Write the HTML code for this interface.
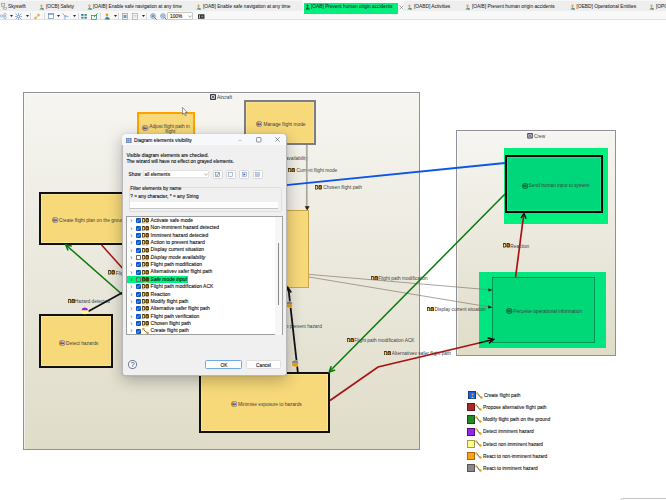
<!DOCTYPE html>
<html><head><meta charset="utf-8">
<style>
*{margin:0;padding:0;box-sizing:border-box}
html,body{width:666px;height:500px;overflow:hidden;background:#fff;font-family:"Liberation Sans",sans-serif;color:#222}
.a{position:absolute}
.t{position:absolute;white-space:nowrap;line-height:6px;height:6px;font-size:4.8px;-webkit-text-stroke:0.1px currentColor}
#tabs{left:0;top:0;width:666px;height:11.5px;background:linear-gradient(#f7f7f7 0,#f7f7f7 1.5px,#eeeeee 1.5px,#eeeeee 10.8px,#f4f4f4 10.8px)}
#tools{left:0;top:11px;width:666px;height:9px;background:#f8f8f8;border-bottom:1px solid #e2e2e2}
.dl{color:#404040;-webkit-text-stroke:0px}
.box{position:absolute;background:#f7d97a}
.cont{position:absolute;border:1.3px solid #909098;box-shadow:inset 0.6px 0.6px 0 #fdfdf8;background:linear-gradient(#f6f5f1,#dfdcc8)}
</style></head><body>
<div id="tabs" class="a"></div>
<div id="tools" class="a"></div>
<div class="a" style="left:302px;top:0;width:102px;height:12px;background:#fbfbfb"></div>
<div class="a" style="left:304px;top:2.7px;width:93.6px;height:11.3px;background:#00f07e"></div>
<svg class="a" style="left:0.5px;top:3px" width="6" height="7" viewBox="0 0 6 7"><rect x="0.5" y="0.5" width="3.2" height="2.6" fill="none" stroke="#8a8a8a" stroke-width="0.6"/><path d="M2 3.1V5.5H3" stroke="#8a8a8a" stroke-width="0.5" fill="none"/><rect x="3" y="4.3" width="2.5" height="2.2" fill="none" stroke="#9a9aa8" stroke-width="0.6"/></svg>
<div class="t" style="left:8px;top:3.60px;-webkit-text-stroke:0.05px #333;color:#262626">Skyswift</div>
<svg class="a" style="left:39px;top:4px" width="5" height="6" viewBox="0 0 5 6"><circle cx="2.5" cy="1.7" r="1.2" fill="#eaa84a"/><path d="M0.4 5.6 L2.5 2.9 L4.6 5.6Z" fill="#6a8cb8"/><circle cx="3.9" cy="4.9" r="0.9" fill="#3aa050"/></svg>
<div class="t" style="left:46px;top:3.60px;-webkit-text-stroke:0.05px #333;color:#262626">[OCB] Safety</div>
<svg class="a" style="left:87px;top:4px" width="5" height="6" viewBox="0 0 5 6"><circle cx="2.5" cy="1.7" r="1.2" fill="#eaa84a"/><path d="M0.4 5.6 L2.5 2.9 L4.6 5.6Z" fill="#6a8cb8"/><circle cx="3.9" cy="4.9" r="0.9" fill="#3aa050"/></svg>
<div class="t" style="left:93px;top:3.60px;-webkit-text-stroke:0.05px #333;color:#262626">[OAIB] Enable safe navigation at any time</div>
<svg class="a" style="left:196px;top:4px" width="5" height="6" viewBox="0 0 5 6"><circle cx="2.5" cy="1.7" r="1.2" fill="#eaa84a"/><path d="M0.4 5.6 L2.5 2.9 L4.6 5.6Z" fill="#6a8cb8"/><circle cx="3.9" cy="4.9" r="0.9" fill="#3aa050"/></svg>
<div class="t" style="left:203px;top:3.60px;-webkit-text-stroke:0.05px #333;color:#262626">[OAB] Enable safe navigation at any time</div>
<svg class="a" style="left:305px;top:4px" width="5" height="6" viewBox="0 0 5 6"><circle cx="2.5" cy="1.6" r="1.2" fill="#0a6a30"/><path d="M0.3 5.6 L2.5 2.6 L4.7 5.6Z" fill="#0a5a2a"/><circle cx="3.8" cy="4.8" r="0.9" fill="#0a8a3a"/></svg>
<div class="t" style="left:311px;top:3.60px;-webkit-text-stroke:0.05px #333;color:#262626">[OAB] Prevent human origin accidents</div>
<svg class="a" style="left:407px;top:4px" width="5" height="6" viewBox="0 0 5 6"><circle cx="2.5" cy="1.7" r="1.2" fill="#eaa84a"/><path d="M0.4 5.6 L2.5 2.9 L4.6 5.6Z" fill="#6a8cb8"/><circle cx="3.9" cy="4.9" r="0.9" fill="#3aa050"/></svg>
<div class="t" style="left:414px;top:3.60px;-webkit-text-stroke:0.05px #333;color:#262626">[OABD] Activities</div>
<svg class="a" style="left:465px;top:4px" width="5" height="6" viewBox="0 0 5 6"><circle cx="2.5" cy="1.7" r="1.2" fill="#eaa84a"/><path d="M0.4 5.6 L2.5 2.9 L4.6 5.6Z" fill="#6a8cb8"/><circle cx="3.9" cy="4.9" r="0.9" fill="#3aa050"/></svg>
<div class="t" style="left:472px;top:3.60px;-webkit-text-stroke:0.05px #333;color:#262626">[OAIB] Prevent human origin accidents</div>
<svg class="a" style="left:570px;top:4px" width="5" height="6" viewBox="0 0 5 6"><circle cx="2.5" cy="1.7" r="1.2" fill="#eaa84a"/><path d="M0.4 5.6 L2.5 2.9 L4.6 5.6Z" fill="#6a8cb8"/><circle cx="3.9" cy="4.9" r="0.9" fill="#3aa050"/></svg>
<div class="t" style="left:576.6px;top:3.60px;-webkit-text-stroke:0.05px #333;color:#262626">[OEBD] Operational Entities</div>
<svg class="a" style="left:649px;top:4px" width="5" height="6" viewBox="0 0 5 6"><circle cx="2.5" cy="1.7" r="1.2" fill="#eaa84a"/><path d="M0.4 5.6 L2.5 2.9 L4.6 5.6Z" fill="#6a8cb8"/><circle cx="3.9" cy="4.9" r="0.9" fill="#3aa050"/></svg>
<div class="t" style="left:656px;top:3.60px;-webkit-text-stroke:0.05px #333;color:#262626">[OPC] Operational Processes</div>
<svg class="a" style="left:398.5px;top:4.5px" width="5" height="5" viewBox="0 0 5 5"><path d="M0.6 0.6L4.4 4.4M4.4 0.6L0.6 4.4" stroke="#666" stroke-width="0.55"/></svg>

<svg class="a" style="left:0px;top:13px" width="7" height="6" viewBox="0 0 7 6"><circle cx="1.5" cy="3" r="1.2" fill="none" stroke="#86a8d4" stroke-width="0.7"/><circle cx="5" cy="1.5" r="1.2" fill="none" stroke="#86a8d4" stroke-width="0.7"/><circle cx="5" cy="4.5" r="1.2" fill="none" stroke="#86a8d4" stroke-width="0.7"/><path d="M2.5 3L4 1.8M2.5 3L4 4.2" stroke="#86a8d4" stroke-width="0.6"/></svg>
<svg class="a" style="left:10px;top:15px" width="3" height="2" viewBox="0 0 3 2"><path d="M0 0H3L1.5 2Z" fill="#222"/></svg>
<svg class="a" style="left:15px;top:12.5px" width="7" height="7" viewBox="0 0 7 7"><path d="M0.5 0.5L6.5 6.5M6.5 0.5L0.5 6.5M3.5 0V7M0 3.5H7" stroke="#80a0cc" stroke-width="0.8"/><rect x="2.3" y="2.3" width="2.4" height="2.4" fill="#fff" stroke="#80a0cc" stroke-width="0.6"/></svg>
<svg class="a" style="left:25.5px;top:15px" width="3" height="2" viewBox="0 0 3 2"><path d="M0 0H3L1.5 2Z" fill="#222"/></svg>
<div class="a" style="left:30px;top:12.5px;width:0.7px;height:7px;background:#d8d8d8"></div>
<svg class="a" style="left:34px;top:12.5px" width="6" height="7" viewBox="0 0 6 7"><path d="M2 4.5L4 2.5" stroke="#c89020" stroke-width="0.6"/><path d="M0.2 5L1.5 3.7L2.8 5L1.5 6.3Z" fill="#f0c040" stroke="#c08a20" stroke-width="0.4"/><path d="M3.2 2L4.5 0.7L5.8 2L4.5 3.3Z" fill="#f0c040" stroke="#c08a20" stroke-width="0.4"/></svg>
<div class="a" style="left:44px;top:12.5px;width:0.7px;height:7px;background:#d8d8d8"></div>
<svg class="a" style="left:48px;top:13px" width="6" height="6" viewBox="0 0 6 6"><rect x="0.5" y="0.5" width="5" height="5" fill="#fff" stroke="#6a8ab8" stroke-width="0.7"/><path d="M0.5 1.5H5.5" stroke="#6a8ab8" stroke-width="0.7"/></svg>
<svg class="a" style="left:56.5px;top:15px" width="3" height="2" viewBox="0 0 3 2"><path d="M0 0H3L1.5 2Z" fill="#222"/></svg>
<svg class="a" style="left:62px;top:13px" width="7" height="7" viewBox="0 0 7 7"><path d="M0.5 0.5L3 3L3 6.5M3 3L6.5 3.5" stroke="#6a9ad0" stroke-width="0.8" fill="none"/><circle cx="3" cy="3" r="1" fill="#9ab8e0"/></svg>
<svg class="a" style="left:73px;top:15px" width="3" height="2" viewBox="0 0 3 2"><path d="M0 0H3L1.5 2Z" fill="#222"/></svg>
<div class="a" style="left:78px;top:12.5px;width:0.7px;height:7px;background:#d8d8d8"></div>
<svg class="a" style="left:81px;top:13px" width="6" height="6" viewBox="0 0 6 6"><rect x="0.3" y="1" width="2.2" height="1.8" fill="#2a6ab0"/><rect x="3.5" y="1" width="2.2" height="1.8" fill="#2a9a50"/><rect x="0.3" y="3.8" width="2.2" height="1.8" fill="#2a9a50"/><rect x="3.5" y="3.8" width="2.2" height="1.8" fill="#2a6ab0"/></svg>
<svg class="a" style="left:91px;top:12.5px" width="7" height="7" viewBox="0 0 7 7"><rect x="0.5" y="2.5" width="5" height="4" fill="#fff" stroke="#3a6ab0" stroke-width="0.7"/><path d="M3 4L6.5 0.5" stroke="#20a040" stroke-width="1"/></svg>
<div class="a" style="left:100px;top:12.5px;width:0.7px;height:7px;background:#d8d8d8"></div>
<svg class="a" style="left:104px;top:12.5px" width="6" height="7" viewBox="0 0 6 7"><circle cx="3" cy="1.8" r="1.4" fill="#e0a020"/><path d="M0.3 6.5L3 3.3L5.7 6.5Z" fill="#3a7ab8"/><circle cx="4.6" cy="5.5" r="1" fill="#2aa040"/></svg>
<svg class="a" style="left:113.5px;top:15px" width="3" height="2" viewBox="0 0 3 2"><path d="M0 0H3L1.5 2Z" fill="#222"/></svg>
<div class="a" style="left:118px;top:12.5px;width:0.7px;height:7px;background:#d8d8d8"></div>
<svg class="a" style="left:122px;top:12.5px" width="6" height="7" viewBox="0 0 6 7"><rect x="0.5" y="0.5" width="5" height="6" fill="#f4f0e0" stroke="#8a8aa0" stroke-width="0.6"/><rect x="1.5" y="2" width="3" height="3" fill="#6a9ad0"/></svg>
<svg class="a" style="left:132px;top:12.5px" width="6" height="7" viewBox="0 0 6 7"><rect x="0.5" y="0.5" width="5" height="6" fill="#f8f8f8" stroke="#9a9a9a" stroke-width="0.6"/><path d="M1.5 2.5H4.5M1.5 4H4.5" stroke="#aaa" stroke-width="0.5"/></svg>
<svg class="a" style="left:141.5px;top:15px" width="3" height="2" viewBox="0 0 3 2"><path d="M0 0H3L1.5 2Z" fill="#222"/></svg>
<div class="a" style="left:146px;top:12.5px;width:0.7px;height:7px;background:#d8d8d8"></div>
<svg class="a" style="left:150px;top:12.5px" width="7" height="7" viewBox="0 0 7 7"><circle cx="3" cy="3" r="2.3" fill="#d8e8f8" stroke="#5a7aa0" stroke-width="0.7"/><path d="M1.8 3H4.2M3 1.8V4.2" stroke="#2a5aa0" stroke-width="0.7"/><path d="M4.6 4.6L6.6 6.6" stroke="#806040" stroke-width="1"/></svg>
<svg class="a" style="left:160px;top:12.5px" width="7" height="7" viewBox="0 0 7 7"><circle cx="3" cy="3" r="2.3" fill="#d8e8f8" stroke="#5a7aa0" stroke-width="0.7"/><path d="M1.8 3H4.2" stroke="#2a5aa0" stroke-width="0.7"/><path d="M4.6 4.6L6.6 6.6" stroke="#806040" stroke-width="1"/></svg>
<div class="a" style="left:167.4px;top:11.6px;width:26px;height:8.6px;background:#fff;border:0.6px solid #c8c8c8;border-radius:1px"></div>
<div class="t" style="left:170px;top:13.6px;font-size:4.8px;color:#222">100%</div>
<svg class="a" style="left:188px;top:14.5px" width="4" height="3" viewBox="0 0 4 3"><path d="M0.3 0.5L2 2.3L3.7 0.5" stroke="#555" stroke-width="0.5" fill="none"/></svg>
<svg class="a" style="left:198px;top:14px" width="7" height="5" viewBox="0 0 7 5"><rect x="0" y="0.3" width="6.5" height="4.5" rx="0.5" fill="#333"/><rect x="1" y="1.2" width="0.8" height="2.8" fill="#ddd"/><circle cx="4.3" cy="2.5" r="1.1" fill="#888"/></svg>

<!-- Aircraft container -->
<div class="cont" style="left:23px;top:92px;width:397px;height:358px"></div>
<!-- Crew container -->
<div class="cont" style="left:456px;top:130px;width:160px;height:226px"></div>

<!-- boxes -->
<div class="box" style="left:137px;top:112px;width:58px;height:30px;border:2px solid #ffa200"></div>
<div class="box" style="left:243.8px;top:100px;width:72px;height:45px;border:2px solid #7c7c84;box-shadow:inset 0 0 0 0.6px #fbe8a0"></div>
<div class="box" style="left:39px;top:192px;width:150px;height:53px;border:2px solid #111;box-shadow:inset 0 0 0 0.7px #fbeaa0"></div>
<div class="box" style="left:200px;top:210px;width:109px;height:78px;border:1px solid #c9a54a"></div>
<div class="box" style="left:39px;top:314px;width:74px;height:54px;border:2px solid #111;box-shadow:inset 0 0 0 0.7px #fbeaa0"></div>
<div class="box" style="left:198.6px;top:371.5px;width:131px;height:61.5px;border:2px solid #111;box-shadow:inset 0 0 0 0.7px #fbeaa0"></div>

<!-- green -->
<div class="a" style="left:504px;top:148px;width:104px;height:76px;background:#00f080"></div>
<div class="a" style="left:505px;top:155px;width:98px;height:58px;background:#00d67a;border:2px solid #000;box-shadow:inset 0 0 0 0.7px #20f090"></div>
<div class="a" style="left:479px;top:272px;width:127px;height:76px;background:#00e57f"></div>
<div class="a" style="left:492px;top:277px;width:103px;height:66px;background:#00d878;border:1px solid #00934f"></div>

<svg class="a" style="left:142.0px;top:125.20px" width="6.5" height="6" viewBox="0 0 6.5 6"><ellipse cx="3.2" cy="3" rx="2.9" ry="2.7" fill="#c8d0e0" stroke="#6a6050" stroke-width="0.6"/><path d="M0.4 3A2.8 2.6 0 0 1 2.6 0.4V5.6A2.8 2.6 0 0 1 0.4 3Z" fill="#f08010"/><path d="M1.6 3.2H4.6" stroke="#1a2a50" stroke-width="0.9"/><path d="M3.6 2.2L4.8 3.2L3.6 4.1" stroke="#1a2a50" stroke-width="0.5" fill="none"/></svg>
<div class="t dl" style="left:149.2px;top:123.60px;">Adjust flight path in</div>
<div class="t dl" style="left:165.2px;top:129.30px;">flight</div>
<svg class="a" style="left:255.5px;top:120.80px" width="6.5" height="6" viewBox="0 0 6.5 6"><ellipse cx="3.2" cy="3" rx="2.9" ry="2.7" fill="#c8d0e0" stroke="#6a6050" stroke-width="0.6"/><path d="M0.4 3A2.8 2.6 0 0 1 2.6 0.4V5.6A2.8 2.6 0 0 1 0.4 3Z" fill="#f08010"/><path d="M1.6 3.2H4.6" stroke="#1a2a50" stroke-width="0.9"/><path d="M3.6 2.2L4.8 3.2L3.6 4.1" stroke="#1a2a50" stroke-width="0.5" fill="none"/></svg>
<div class="t dl" style="left:263.4px;top:121.60px;">Manage flight mode</div>
<svg class="a" style="left:52.0px;top:217.00px" width="6.5" height="6" viewBox="0 0 6.5 6"><ellipse cx="3.2" cy="3" rx="2.9" ry="2.7" fill="#c8d0e0" stroke="#6a6050" stroke-width="0.6"/><path d="M0.4 3A2.8 2.6 0 0 1 2.6 0.4V5.6A2.8 2.6 0 0 1 0.4 3Z" fill="#f08010"/><path d="M1.6 3.2H4.6" stroke="#1a2a50" stroke-width="0.9"/><path d="M3.6 2.2L4.8 3.2L3.6 4.1" stroke="#1a2a50" stroke-width="0.5" fill="none"/></svg>
<div class="t dl" style="left:59px;top:217.80px;">Create flight plan on the ground</div>
<svg class="a" style="left:59.0px;top:339.70px" width="6.5" height="6" viewBox="0 0 6.5 6"><ellipse cx="3.2" cy="3" rx="2.9" ry="2.7" fill="#c8d0e0" stroke="#6a6050" stroke-width="0.6"/><path d="M0.4 3A2.8 2.6 0 0 1 2.6 0.4V5.6A2.8 2.6 0 0 1 0.4 3Z" fill="#f08010"/><path d="M1.6 3.2H4.6" stroke="#1a2a50" stroke-width="0.9"/><path d="M3.6 2.2L4.8 3.2L3.6 4.1" stroke="#1a2a50" stroke-width="0.5" fill="none"/></svg>
<div class="t dl" style="left:66px;top:340.50px;">Detect hazards</div>
<svg class="a" style="left:230.5px;top:400.90px" width="6.5" height="6" viewBox="0 0 6.5 6"><ellipse cx="3.2" cy="3" rx="2.9" ry="2.7" fill="#c8d0e0" stroke="#6a6050" stroke-width="0.6"/><path d="M0.4 3A2.8 2.6 0 0 1 2.6 0.4V5.6A2.8 2.6 0 0 1 0.4 3Z" fill="#f08010"/><path d="M1.6 3.2H4.6" stroke="#1a2a50" stroke-width="0.9"/><path d="M3.6 2.2L4.8 3.2L3.6 4.1" stroke="#1a2a50" stroke-width="0.5" fill="none"/></svg>
<div class="t dl" style="left:238px;top:401.70px;">Minimise exposure to hazards</div>
<svg class="a" style="left:521.5px;top:182.50px" width="6.5" height="6" viewBox="0 0 6.5 6"><ellipse cx="3.2" cy="3" rx="2.9" ry="2.7" fill="#08a860" stroke="#065a35" stroke-width="0.6"/><path d="M1.3 3H4.6" stroke="#033a20" stroke-width="0.9"/><circle cx="1.6" cy="2.6" r="0.8" fill="#0a7a30"/></svg>
<div class="t dl" style="left:528.6px;top:183.30px;">Send human input to system</div>
<svg class="a" style="left:506.0px;top:308.00px" width="6.5" height="6" viewBox="0 0 6.5 6"><ellipse cx="3.2" cy="3" rx="2.9" ry="2.7" fill="#08a860" stroke="#065a35" stroke-width="0.6"/><path d="M1.3 3H4.6" stroke="#033a20" stroke-width="0.9"/><circle cx="1.6" cy="2.6" r="0.8" fill="#0a7a30"/></svg>
<div class="t dl" style="left:513.3px;top:308.80px;">Perceive operational information</div>
<svg class="a" style="left:209.8px;top:94px" width="6" height="6" viewBox="0 0 6 6"><rect x="0" y="0" width="6" height="6" rx="0.8" fill="#3a3a48"/><rect x="1" y="1" width="4" height="4" fill="#c8c8d8"/><path d="M1.5 1.5L4.5 4.5M4.5 1.5L1.5 4.5" stroke="#3a3a48" stroke-width="0.7"/></svg>
<div class="t dl" style="left:217px;top:94.80px;">Aircraft</div>
<svg class="a" style="left:526.5px;top:133px" width="6" height="5.5" viewBox="0 0 6 6"><rect x="0" y="0" width="6" height="6" rx="0.8" fill="#3a3a48"/><rect x="1" y="1" width="4" height="4" fill="#c8c8d8"/><path d="M1.5 1.5L4.5 4.5M4.5 1.5L1.5 4.5" stroke="#3a3a48" stroke-width="0.7"/></svg>
<div class="t dl" style="left:534px;top:133.80px;">Crew</div>
<svg class="a" style="left:248.30px;top:155.60px" width="7" height="4.6" viewBox="0 0 7 4.6"><path d="M0.1 0.1H2Q3.3 0.1 3.3 2.3Q3.3 4.5 2 4.5H0.1Z" fill="#3a2a08"/><path d="M0.9 0.9H1.8Q2.4 0.9 2.4 2.3Q2.4 3.7 1.8 3.7H0.9Z" fill="#f0dc90"/><rect x="3.5" y="0.1" width="3.4" height="4.4" rx="1" fill="#3a2a08"/><path d="M4.2 2.3H6.2M5.2 0.9V3.7" stroke="#e88a10" stroke-width="0.9"/></svg>
<div class="t dl" style="left:255.30px;top:155.90px;">Display mode availability</div>
<svg class="a" style="left:288.30px;top:167.60px" width="7" height="4.6" viewBox="0 0 7 4.6"><path d="M0.1 0.1H2Q3.3 0.1 3.3 2.3Q3.3 4.5 2 4.5H0.1Z" fill="#3a2a08"/><path d="M0.9 0.9H1.8Q2.4 0.9 2.4 2.3Q2.4 3.7 1.8 3.7H0.9Z" fill="#f0dc90"/><rect x="3.5" y="0.1" width="3.4" height="4.4" rx="1" fill="#3a2a08"/><path d="M4.2 2.3H6.2M5.2 0.9V3.7" stroke="#e88a10" stroke-width="0.9"/></svg>
<div class="t dl" style="left:296.50px;top:167.90px;">Current flight mode</div>
<svg class="a" style="left:315.30px;top:185.10px" width="7" height="4.6" viewBox="0 0 7 4.6"><path d="M0.1 0.1H2Q3.3 0.1 3.3 2.3Q3.3 4.5 2 4.5H0.1Z" fill="#3a2a08"/><path d="M0.9 0.9H1.8Q2.4 0.9 2.4 2.3Q2.4 3.7 1.8 3.7H0.9Z" fill="#f0dc90"/><rect x="3.5" y="0.1" width="3.4" height="4.4" rx="1" fill="#3a2a08"/><path d="M4.2 2.3H6.2M5.2 0.9V3.7" stroke="#e88a10" stroke-width="0.9"/></svg>
<div class="t dl" style="left:323.30px;top:185.40px;">Chosen flight path</div>
<svg class="a" style="left:370.90px;top:275.90px" width="7" height="4.6" viewBox="0 0 7 4.6"><path d="M0.1 0.1H2Q3.3 0.1 3.3 2.3Q3.3 4.5 2 4.5H0.1Z" fill="#3a2a08"/><path d="M0.9 0.9H1.8Q2.4 0.9 2.4 2.3Q2.4 3.7 1.8 3.7H0.9Z" fill="#f0dc90"/><rect x="3.5" y="0.1" width="3.4" height="4.4" rx="1" fill="#3a2a08"/><path d="M4.2 2.3H6.2M5.2 0.9V3.7" stroke="#e88a10" stroke-width="0.9"/></svg>
<div class="t dl" style="left:378.30px;top:276.20px;">Flight path modification</div>
<svg class="a" style="left:427.00px;top:306.90px" width="7" height="4.6" viewBox="0 0 7 4.6"><path d="M0.1 0.1H2Q3.3 0.1 3.3 2.3Q3.3 4.5 2 4.5H0.1Z" fill="#3a2a08"/><path d="M0.9 0.9H1.8Q2.4 0.9 2.4 2.3Q2.4 3.7 1.8 3.7H0.9Z" fill="#f0dc90"/><rect x="3.5" y="0.1" width="3.4" height="4.4" rx="1" fill="#3a2a08"/><path d="M4.2 2.3H6.2M5.2 0.9V3.7" stroke="#e88a10" stroke-width="0.9"/></svg>
<div class="t dl" style="left:434.50px;top:307.20px;">Display current situation</div>
<svg class="a" style="left:262.30px;top:323.40px" width="7" height="4.6" viewBox="0 0 7 4.6"><path d="M0.1 0.1H2Q3.3 0.1 3.3 2.3Q3.3 4.5 2 4.5H0.1Z" fill="#3a2a08"/><path d="M0.9 0.9H1.8Q2.4 0.9 2.4 2.3Q2.4 3.7 1.8 3.7H0.9Z" fill="#f0dc90"/><rect x="3.5" y="0.1" width="3.4" height="4.4" rx="1" fill="#3a2a08"/><path d="M4.2 2.3H6.2M5.2 0.9V3.7" stroke="#e88a10" stroke-width="0.9"/></svg>
<div class="t dl" style="left:269.80px;top:323.70px;">Action to prevent hazard</div>
<svg class="a" style="left:346.80px;top:337.90px" width="7" height="4.6" viewBox="0 0 7 4.6"><path d="M0.1 0.1H2Q3.3 0.1 3.3 2.3Q3.3 4.5 2 4.5H0.1Z" fill="#3a2a08"/><path d="M0.9 0.9H1.8Q2.4 0.9 2.4 2.3Q2.4 3.7 1.8 3.7H0.9Z" fill="#f0dc90"/><rect x="3.5" y="0.1" width="3.4" height="4.4" rx="1" fill="#3a2a08"/><path d="M4.2 2.3H6.2M5.2 0.9V3.7" stroke="#e88a10" stroke-width="0.9"/></svg>
<div class="t dl" style="left:354.30px;top:338.20px;">Flight path modification ACK</div>
<svg class="a" style="left:384.30px;top:350.90px" width="7" height="4.6" viewBox="0 0 7 4.6"><path d="M0.1 0.1H2Q3.3 0.1 3.3 2.3Q3.3 4.5 2 4.5H0.1Z" fill="#3a2a08"/><path d="M0.9 0.9H1.8Q2.4 0.9 2.4 2.3Q2.4 3.7 1.8 3.7H0.9Z" fill="#f0dc90"/><rect x="3.5" y="0.1" width="3.4" height="4.4" rx="1" fill="#3a2a08"/><path d="M4.2 2.3H6.2M5.2 0.9V3.7" stroke="#e88a10" stroke-width="0.9"/></svg>
<div class="t dl" style="left:391.80px;top:351.20px;">Alternativev safer flight path</div>
<svg class="a" style="left:503.00px;top:243.40px" width="7" height="4.6" viewBox="0 0 7 4.6"><path d="M0.1 0.1H2Q3.3 0.1 3.3 2.3Q3.3 4.5 2 4.5H0.1Z" fill="#3a2a08"/><path d="M0.9 0.9H1.8Q2.4 0.9 2.4 2.3Q2.4 3.7 1.8 3.7H0.9Z" fill="#f0dc90"/><rect x="3.5" y="0.1" width="3.4" height="4.4" rx="1" fill="#3a2a08"/><path d="M4.2 2.3H6.2M5.2 0.9V3.7" stroke="#e88a10" stroke-width="0.9"/></svg>
<div class="t dl" style="left:510.30px;top:243.70px;">Reaction</div>
<svg class="a" style="left:67.50px;top:298.70px" width="7" height="4.6" viewBox="0 0 7 4.6"><path d="M0.1 0.1H2Q3.3 0.1 3.3 2.3Q3.3 4.5 2 4.5H0.1Z" fill="#3a2a08"/><path d="M0.9 0.9H1.8Q2.4 0.9 2.4 2.3Q2.4 3.7 1.8 3.7H0.9Z" fill="#f0dc90"/><rect x="3.5" y="0.1" width="3.4" height="4.4" rx="1" fill="#3a2a08"/><path d="M4.2 2.3H6.2M5.2 0.9V3.7" stroke="#e88a10" stroke-width="0.9"/></svg>
<div class="t dl" style="left:74.80px;top:299.00px;">Hazard detected</div>
<svg class="a" style="left:108.30px;top:270.40px" width="7" height="4.6" viewBox="0 0 7 4.6"><path d="M0.1 0.1H2Q3.3 0.1 3.3 2.3Q3.3 4.5 2 4.5H0.1Z" fill="#3a2a08"/><path d="M0.9 0.9H1.8Q2.4 0.9 2.4 2.3Q2.4 3.7 1.8 3.7H0.9Z" fill="#f0dc90"/><rect x="3.5" y="0.1" width="3.4" height="4.4" rx="1" fill="#3a2a08"/><path d="M4.2 2.3H6.2M5.2 0.9V3.7" stroke="#e88a10" stroke-width="0.9"/></svg>
<div class="t dl" style="left:115.80px;top:270.70px;">Flight path modification</div>

<div class="a" style="left:467.7px;top:391.10px;width:8.2px;height:8.1px;background:#1565e8;border:0.7px solid #1a3a80"></div>
<svg class="a" style="left:469.5px;top:392.5px" width="5" height="6" viewBox="0 0 5 6"><circle cx="2.6" cy="1.6" r="1" fill="#f0a020"/><path d="M0.8 5.2L2.5 3.2L4.3 5.2" fill="#9ad080"/></svg>
<svg class="a" style="left:476.0px;top:391.5px" width="7" height="7" viewBox="0 0 7 7"><path d="M1.3 1.3L2.8 2.6L3.4 4.2L5.3 5.4" stroke="#2a2a2a" stroke-width="0.75" fill="none"/><circle cx="1.3" cy="1.4" r="1.1" fill="#f09a10"/><circle cx="5.4" cy="5.5" r="1.25" fill="#f09a10"/></svg>
<div class="t" style="left:483.9px;top:392.90px;color:#222">Create flight path</div>
<div class="a" style="left:467.1px;top:403.30px;width:8.2px;height:8.1px;background:#a82a2a;border:0.7px solid #6a1a1a"></div>
<svg class="a" style="left:475.40000000000003px;top:403.7px" width="7" height="7" viewBox="0 0 7 7"><path d="M1.3 1.3L2.8 2.6L3.4 4.2L5.3 5.4" stroke="#2a2a2a" stroke-width="0.75" fill="none"/><circle cx="1.3" cy="1.4" r="1.1" fill="#f09a10"/><circle cx="5.4" cy="5.5" r="1.25" fill="#f09a10"/></svg>
<div class="t" style="left:483px;top:405.10px;color:#222">Propose alternative flight path</div>
<div class="a" style="left:467.1px;top:415.48px;width:8.2px;height:8.1px;background:#228a22;border:0.7px solid #1a4a1a"></div>
<svg class="a" style="left:475.40000000000003px;top:415.88px" width="7" height="7" viewBox="0 0 7 7"><path d="M1.3 1.3L2.8 2.6L3.4 4.2L5.3 5.4" stroke="#2a2a2a" stroke-width="0.75" fill="none"/><circle cx="1.3" cy="1.4" r="1.1" fill="#f09a10"/><circle cx="5.4" cy="5.5" r="1.25" fill="#f09a10"/></svg>
<div class="t" style="left:483px;top:417.28px;color:#222">Modify flight path on the ground</div>
<div class="a" style="left:467.1px;top:427.66px;width:8.2px;height:8.1px;background:#9a22f0;border:0.7px solid #4a1a70"></div>
<svg class="a" style="left:475.40000000000003px;top:428.06px" width="7" height="7" viewBox="0 0 7 7"><path d="M1.3 1.3L2.8 2.6L3.4 4.2L5.3 5.4" stroke="#2a2a2a" stroke-width="0.75" fill="none"/><circle cx="1.3" cy="1.4" r="1.1" fill="#f09a10"/><circle cx="5.4" cy="5.5" r="1.25" fill="#f09a10"/></svg>
<div class="t" style="left:483px;top:429.46px;color:#222">Detect imminent hazard</div>
<div class="a" style="left:467.1px;top:439.84px;width:8.2px;height:8.1px;background:#ffff80;border:0.7px solid #a09a60"></div>
<svg class="a" style="left:475.40000000000003px;top:440.24px" width="7" height="7" viewBox="0 0 7 7"><path d="M1.3 1.3L2.8 2.6L3.4 4.2L5.3 5.4" stroke="#2a2a2a" stroke-width="0.75" fill="none"/><circle cx="1.3" cy="1.4" r="1.1" fill="#f09a10"/><circle cx="5.4" cy="5.5" r="1.25" fill="#f09a10"/></svg>
<div class="t" style="left:483px;top:441.64px;color:#222">Detect non imminent hazard</div>
<div class="a" style="left:467.1px;top:452.02px;width:8.2px;height:8.1px;background:#ffa010;border:0.7px solid #a06a20"></div>
<svg class="a" style="left:475.40000000000003px;top:452.41999999999996px" width="7" height="7" viewBox="0 0 7 7"><path d="M1.3 1.3L2.8 2.6L3.4 4.2L5.3 5.4" stroke="#2a2a2a" stroke-width="0.75" fill="none"/><circle cx="1.3" cy="1.4" r="1.1" fill="#f09a10"/><circle cx="5.4" cy="5.5" r="1.25" fill="#f09a10"/></svg>
<div class="t" style="left:483px;top:453.82px;color:#222">React to non-imminent hazard</div>
<div class="a" style="left:467.1px;top:464.20px;width:8.2px;height:8.1px;background:#8a8a8a;border:0.7px solid #555555"></div>
<svg class="a" style="left:475.40000000000003px;top:464.59999999999997px" width="7" height="7" viewBox="0 0 7 7"><path d="M1.3 1.3L2.8 2.6L3.4 4.2L5.3 5.4" stroke="#2a2a2a" stroke-width="0.75" fill="none"/><circle cx="1.3" cy="1.4" r="1.1" fill="#f09a10"/><circle cx="5.4" cy="5.5" r="1.25" fill="#f09a10"/></svg>
<div class="t" style="left:483px;top:466.00px;color:#222">React to imminent hazard</div>
<div class="a" style="left:620px;top:497.7px;width:60px;height:10px;border:0.7px solid #c8c8c8;border-radius:3px;background:#fcfcfc"></div>

<!-- lines -->
<svg class="a" style="left:0;top:0" width="666" height="500">
<path d="M307 145V209" stroke="#b4b4aa" stroke-width="1.6"/><path d="M306.4 145V209" stroke="#8a8a84" stroke-width="0.5"/><path d="M305.2 206.5L307.2 210L309.2 206.5Z" fill="#222" stroke="#222" stroke-width="0.6"/><path d="M309 274.4L492 290" stroke="#8a7a6a" stroke-width="0.7"/><path d="M488.5 288.2L492.5 290L488.3 291.5Z" fill="#222"/><path d="M309 277L492 307.4" stroke="#8a7a6a" stroke-width="0.7"/><path d="M488.4 305.3L492.5 307.4L488 308.6Z" fill="#222"/><path d="M250 188.7L505 163" stroke="#0c55e8" stroke-width="1.8"/><path d="M505 194L330 371" stroke="#0c780c" stroke-width="1.5"/><path d="M331.17 366.12L329.30 372.00L335.16 370.05" fill="none" stroke="#0c780c" stroke-width="1.6" stroke-linejoin="miter"/><path d="M66 245L200 363" stroke="#0c780c" stroke-width="1.5"/><path d="M71.78 246.34L65.80 244.80L68.07 250.54" fill="none" stroke="#0c780c" stroke-width="1.6" stroke-linejoin="miter"/><path d="M101.6 245L160 310" stroke="#a81212" stroke-width="1.5"/><path d="M330 400.5L378 367L479 343" stroke="#a81212" stroke-width="1.7" fill="none"/><path d="M479 343L493 339.5" stroke="#1a1010" stroke-width="1.7"/><path d="M488.90 343.30L493.60 339.30L487.60 337.86" fill="none" stroke="#1a1010" stroke-width="1.6" stroke-linejoin="miter"/><path d="M515.6 277L523.8 214" stroke="#a81212" stroke-width="1.7"/><path d="M526.04 218.75L524.00 213.50L520.87 218.19" fill="none" stroke="#1a1010" stroke-width="1.5" stroke-linejoin="miter"/><path d="M88.5 311.2L160 272" stroke="#111" stroke-width="1.7"/><path d="M297.8 372L288.5 289" stroke="#111" stroke-width="1.8"/><path d="M291.23 292.53L287.80 287.40L285.66 293.19" fill="none" stroke="#111" stroke-width="1.6" stroke-linejoin="miter"/><circle cx="84.8" cy="310.6" r="3.7" fill="#fff" opacity="0.7"/><path d="M81.6 310.6A3.2 3.2 0 0 1 88.0 310.6Z" fill="#a020f0"/><path d="M81.6 310.6A3.2 3.2 0 0 0 88.0 310.6Z" fill="#ffff70"/><circle cx="289.2" cy="304.4" r="3.7" fill="#fff" opacity="0.7"/><path d="M286.0 304.4A3.2 3.2 0 0 1 292.4 304.4Z" fill="#8a8a8a"/><path d="M286.0 304.4A3.2 3.2 0 0 0 292.4 304.4Z" fill="#f0a000"/><circle cx="295.1" cy="363.5" r="3.7" fill="#fff" opacity="0.7"/><path d="M291.90000000000003 363.5A3.2 3.2 0 0 1 298.3 363.5Z" fill="#8a8a8a"/><path d="M291.90000000000003 363.5A3.2 3.2 0 0 0 298.3 363.5Z" fill="#f0a000"/>
</svg>

<!-- dialog -->
<div class="a" style="left:121.5px;top:133.5px;width:165.5px;height:242px;background:#f0f0f0;border:0.6px solid #b8b8b8;border-radius:3px;box-shadow:0 0 1.5px rgba(0,0,0,0.2),0 4px 16px rgba(0,0,0,0.28)"></div>
<div class="a" style="left:122.1px;top:134.1px;width:164.3px;height:11px;background:#f7f8fb;border-radius:3px 3px 0 0"></div>
<svg class="a" style="left:126px;top:137.5px" width="5.5" height="5" viewBox="0 0 5.5 5"><rect x="0" y="0" width="5.5" height="5" fill="#5a7ab0"/><path d="M0 1.7H5.5M0 3.3H5.5M1.8 0V5M3.6 0V5" stroke="#c8d8f0" stroke-width="0.5"/></svg>
<div class="t" style="left:133.9px;top:137.80px;font-size:4.9px;color:#111">Diagram elements visibility</div>
<div class="a" style="left:238px;top:139.5px;width:4px;height:0.4px;background:#ccc"></div>
<svg class="a" style="left:256px;top:137px" width="5.5" height="5.5" viewBox="0 0 5.5 5.5"><rect x="0.5" y="0.5" width="4.5" height="4.5" rx="0.8" fill="none" stroke="#444" stroke-width="0.55"/></svg>
<svg class="a" style="left:274.5px;top:137.2px" width="5" height="5" viewBox="0 0 5 5"><path d="M0.3 0.3L4.7 4.7M4.7 0.3L0.3 4.7" stroke="#444" stroke-width="0.55"/></svg>
<div class="t" style="left:126.4px;top:153.0px;color:#111">Visible diagram elements are checked.</div>
<div class="t" style="left:126.4px;top:159.2px;color:#111">The wizard will have no effect on grayed elements.</div>
<div class="t" style="left:128.6px;top:172.0px;color:#111">Show</div>
<div class="a" style="left:142.6px;top:170.2px;width:66.5px;height:8px;background:#fff;border:0.5px solid #e2e2e2;border-radius:1.5px"></div>
<div class="t" style="left:144.5px;top:172.0px;color:#111">all elements</div>
<svg class="a" style="left:204px;top:172.5px" width="4" height="3" viewBox="0 0 4 3"><path d="M0.3 0.5L2 2.3L3.7 0.5" stroke="#666" stroke-width="0.5" fill="none"/></svg>
<div class="a" style="left:212.6px;top:169.8px;width:10px;height:9.2px;background:#fbfbfb;border:0.5px solid #d8d8d8;border-radius:1.5px"></div>
<div class="a" style="left:225.6px;top:169.8px;width:10px;height:9.2px;background:#fbfbfb;border:0.5px solid #d8d8d8;border-radius:1.5px"></div>
<div class="a" style="left:239px;top:169.8px;width:10px;height:9.2px;background:#fbfbfb;border:0.5px solid #d8d8d8;border-radius:1.5px"></div>
<div class="a" style="left:252.5px;top:169.8px;width:10px;height:9.2px;background:#fbfbfb;border:0.5px solid #d8d8d8;border-radius:1.5px"></div>
<svg class="a" style="left:215px;top:172px" width="5" height="5" viewBox="0 0 5 5"><rect x="0.3" y="0.3" width="4.4" height="4.4" fill="none" stroke="#4a6a98" stroke-width="0.5"/><path d="M1 2.5L2.1 3.6L4.2 0.8" stroke="#2a5a98" stroke-width="0.6" fill="none"/></svg>
<svg class="a" style="left:228px;top:172px" width="5" height="5" viewBox="0 0 5 5"><rect x="0.3" y="0.3" width="4.4" height="4.4" fill="none" stroke="#6a8ab8" stroke-width="0.5"/></svg>
<svg class="a" style="left:241.5px;top:172px" width="5" height="5" viewBox="0 0 5 5"><rect x="0.3" y="0.3" width="4.4" height="4.4" fill="#eef2f8" stroke="#6a8ab8" stroke-width="0.5"/><path d="M1.5 1.2L3.6 2.5L1.5 3.8Z" fill="#2a5aa0"/></svg>
<svg class="a" style="left:255px;top:172px" width="5" height="5" viewBox="0 0 5 5"><rect x="0.3" y="0.3" width="4.4" height="4.4" fill="#eef2f8" stroke="#7a9ac0" stroke-width="0.5"/><path d="M1 2H4M1 3.2H4" stroke="#5a7ab0" stroke-width="0.5"/></svg>
<div class="a" style="left:129px;top:186.8px;width:153px;height:25.6px;border:0.5px solid #dedede;border-radius:1.5px;background:#f0f0f0"></div>
<div class="t" style="left:130.2px;top:186.20px;color:#111;background:#f0f0f0;padding-right:1px">Filter elements by name</div>
<div class="t" style="left:130.2px;top:194.00px;color:#111">? = any character, * = any String</div>
<div class="a" style="left:130.2px;top:201.6px;width:148.2px;height:7.8px;background:#fff;border-bottom:0.6px solid #c4c4c4"></div>
<div class="a" style="left:126.3px;top:216px;width:156.3px;height:119px;background:#fff;border:0.6px solid #a0a0a0"></div>
<svg class="a" style="left:130px;top:219.20px" width="3" height="3.4" viewBox="0 0 3 3.4"><path d="M0.6 0.4L2.2 1.7L0.6 3" stroke="#555" stroke-width="0.6" fill="none"/></svg>
<svg class="a" style="left:135.7px;top:218.25px" width="5" height="5" viewBox="0 0 5 5"><rect x="0" y="0" width="5" height="5" rx="1" fill="#0d55c4"/><path d="M1.1 2.6L2.1 3.5L3.9 1.4" stroke="#fff" stroke-width="0.55" fill="none"/></svg>
<svg class="a" style="left:142.2px;top:218.15px" width="7" height="5.8" viewBox="0 0 7 5.8"><path d="M0.1 0.1H2Q3.3 0.1 3.3 2.3Q3.3 4.5 2 4.5H0.1Z" fill="#3a2a08"/><path d="M0.9 0.9H1.8Q2.4 0.9 2.4 2.3Q2.4 3.7 1.8 3.7H0.9Z" fill="#f0dc90"/><rect x="3.5" y="0.1" width="3.4" height="4.4" rx="1" fill="#3a2a08"/><path d="M4.2 2.3H6.2M5.2 0.9V3.7" stroke="#e88a10" stroke-width="0.9"/><path d="M0.3 5.3H6.6" stroke="#e8c878" stroke-width="0.6"/></svg>
<div class="t" style="left:150.6px;top:217.00px;color:#111;font-size:5px;">Activate safe mode</div>
<svg class="a" style="left:130px;top:226.55px" width="3" height="3.4" viewBox="0 0 3 3.4"><path d="M0.6 0.4L2.2 1.7L0.6 3" stroke="#555" stroke-width="0.6" fill="none"/></svg>
<svg class="a" style="left:135.7px;top:225.60px" width="5" height="5" viewBox="0 0 5 5"><rect x="0" y="0" width="5" height="5" rx="1" fill="#0d55c4"/><path d="M1.1 2.6L2.1 3.5L3.9 1.4" stroke="#fff" stroke-width="0.55" fill="none"/></svg>
<svg class="a" style="left:142.2px;top:225.50px" width="7" height="5.8" viewBox="0 0 7 5.8"><path d="M0.1 0.1H2Q3.3 0.1 3.3 2.3Q3.3 4.5 2 4.5H0.1Z" fill="#3a2a08"/><path d="M0.9 0.9H1.8Q2.4 0.9 2.4 2.3Q2.4 3.7 1.8 3.7H0.9Z" fill="#f0dc90"/><rect x="3.5" y="0.1" width="3.4" height="4.4" rx="1" fill="#3a2a08"/><path d="M4.2 2.3H6.2M5.2 0.9V3.7" stroke="#e88a10" stroke-width="0.9"/><path d="M0.3 5.3H6.6" stroke="#e8c878" stroke-width="0.6"/></svg>
<div class="t" style="left:150.6px;top:224.35px;color:#111;font-size:5px;">Non-imminent hazard detected</div>
<svg class="a" style="left:130px;top:233.90px" width="3" height="3.4" viewBox="0 0 3 3.4"><path d="M0.6 0.4L2.2 1.7L0.6 3" stroke="#555" stroke-width="0.6" fill="none"/></svg>
<svg class="a" style="left:135.7px;top:232.95px" width="5" height="5" viewBox="0 0 5 5"><rect x="0" y="0" width="5" height="5" rx="1" fill="#0d55c4"/><path d="M1.1 2.6L2.1 3.5L3.9 1.4" stroke="#fff" stroke-width="0.55" fill="none"/></svg>
<svg class="a" style="left:142.2px;top:232.85px" width="7" height="5.8" viewBox="0 0 7 5.8"><path d="M0.1 0.1H2Q3.3 0.1 3.3 2.3Q3.3 4.5 2 4.5H0.1Z" fill="#3a2a08"/><path d="M0.9 0.9H1.8Q2.4 0.9 2.4 2.3Q2.4 3.7 1.8 3.7H0.9Z" fill="#f0dc90"/><rect x="3.5" y="0.1" width="3.4" height="4.4" rx="1" fill="#3a2a08"/><path d="M4.2 2.3H6.2M5.2 0.9V3.7" stroke="#e88a10" stroke-width="0.9"/><path d="M0.3 5.3H6.6" stroke="#e8c878" stroke-width="0.6"/></svg>
<div class="t" style="left:150.6px;top:231.70px;color:#111;font-size:5px;">Imminent hazard detected</div>
<svg class="a" style="left:130px;top:241.25px" width="3" height="3.4" viewBox="0 0 3 3.4"><path d="M0.6 0.4L2.2 1.7L0.6 3" stroke="#555" stroke-width="0.6" fill="none"/></svg>
<svg class="a" style="left:135.7px;top:240.30px" width="5" height="5" viewBox="0 0 5 5"><rect x="0" y="0" width="5" height="5" rx="1" fill="#0d55c4"/><path d="M1.1 2.6L2.1 3.5L3.9 1.4" stroke="#fff" stroke-width="0.55" fill="none"/></svg>
<svg class="a" style="left:142.2px;top:240.20px" width="7" height="5.8" viewBox="0 0 7 5.8"><path d="M0.1 0.1H2Q3.3 0.1 3.3 2.3Q3.3 4.5 2 4.5H0.1Z" fill="#3a2a08"/><path d="M0.9 0.9H1.8Q2.4 0.9 2.4 2.3Q2.4 3.7 1.8 3.7H0.9Z" fill="#f0dc90"/><rect x="3.5" y="0.1" width="3.4" height="4.4" rx="1" fill="#3a2a08"/><path d="M4.2 2.3H6.2M5.2 0.9V3.7" stroke="#e88a10" stroke-width="0.9"/><path d="M0.3 5.3H6.6" stroke="#e8c878" stroke-width="0.6"/></svg>
<div class="t" style="left:150.6px;top:239.05px;color:#111;font-size:5px;">Action to prevent hazard</div>
<svg class="a" style="left:130px;top:248.60px" width="3" height="3.4" viewBox="0 0 3 3.4"><path d="M0.6 0.4L2.2 1.7L0.6 3" stroke="#555" stroke-width="0.6" fill="none"/></svg>
<svg class="a" style="left:135.7px;top:247.65px" width="5" height="5" viewBox="0 0 5 5"><rect x="0" y="0" width="5" height="5" rx="1" fill="#0d55c4"/><path d="M1.1 2.6L2.1 3.5L3.9 1.4" stroke="#fff" stroke-width="0.55" fill="none"/></svg>
<svg class="a" style="left:142.2px;top:247.55px" width="7" height="5.8" viewBox="0 0 7 5.8"><path d="M0.1 0.1H2Q3.3 0.1 3.3 2.3Q3.3 4.5 2 4.5H0.1Z" fill="#3a2a08"/><path d="M0.9 0.9H1.8Q2.4 0.9 2.4 2.3Q2.4 3.7 1.8 3.7H0.9Z" fill="#f0dc90"/><rect x="3.5" y="0.1" width="3.4" height="4.4" rx="1" fill="#3a2a08"/><path d="M4.2 2.3H6.2M5.2 0.9V3.7" stroke="#e88a10" stroke-width="0.9"/><path d="M0.3 5.3H6.6" stroke="#e8c878" stroke-width="0.6"/></svg>
<div class="t" style="left:150.6px;top:246.40px;color:#111;font-size:5px;">Display current situation</div>
<svg class="a" style="left:130px;top:255.95px" width="3" height="3.4" viewBox="0 0 3 3.4"><path d="M0.6 0.4L2.2 1.7L0.6 3" stroke="#555" stroke-width="0.6" fill="none"/></svg>
<div class="a" style="left:135.7px;top:255.00px;width:5px;height:5px;border:0.5px solid #6a6a6a;border-radius:0.8px;background:#fff"></div>
<svg class="a" style="left:142.2px;top:254.90px" width="7" height="5.8" viewBox="0 0 7 5.8"><path d="M0.1 0.1H2Q3.3 0.1 3.3 2.3Q3.3 4.5 2 4.5H0.1Z" fill="#3a2a08"/><path d="M0.9 0.9H1.8Q2.4 0.9 2.4 2.3Q2.4 3.7 1.8 3.7H0.9Z" fill="#f0dc90"/><rect x="3.5" y="0.1" width="3.4" height="4.4" rx="1" fill="#3a2a08"/><path d="M4.2 2.3H6.2M5.2 0.9V3.7" stroke="#e88a10" stroke-width="0.9"/><path d="M0.3 5.3H6.6" stroke="#e8c878" stroke-width="0.6"/></svg>
<div class="t" style="left:150.6px;top:253.75px;color:#111;font-size:5px;font-style:italic;">Display mode availability</div>
<svg class="a" style="left:130px;top:263.30px" width="3" height="3.4" viewBox="0 0 3 3.4"><path d="M0.6 0.4L2.2 1.7L0.6 3" stroke="#555" stroke-width="0.6" fill="none"/></svg>
<svg class="a" style="left:135.7px;top:262.35px" width="5" height="5" viewBox="0 0 5 5"><rect x="0" y="0" width="5" height="5" rx="1" fill="#0d55c4"/><path d="M1.1 2.6L2.1 3.5L3.9 1.4" stroke="#fff" stroke-width="0.55" fill="none"/></svg>
<svg class="a" style="left:142.2px;top:262.25px" width="7" height="5.8" viewBox="0 0 7 5.8"><path d="M0.1 0.1H2Q3.3 0.1 3.3 2.3Q3.3 4.5 2 4.5H0.1Z" fill="#3a2a08"/><path d="M0.9 0.9H1.8Q2.4 0.9 2.4 2.3Q2.4 3.7 1.8 3.7H0.9Z" fill="#f0dc90"/><rect x="3.5" y="0.1" width="3.4" height="4.4" rx="1" fill="#3a2a08"/><path d="M4.2 2.3H6.2M5.2 0.9V3.7" stroke="#e88a10" stroke-width="0.9"/><path d="M0.3 5.3H6.6" stroke="#e8c878" stroke-width="0.6"/></svg>
<div class="t" style="left:150.6px;top:261.10px;color:#111;font-size:5px;">Flight path modification</div>
<svg class="a" style="left:130px;top:270.65px" width="3" height="3.4" viewBox="0 0 3 3.4"><path d="M0.6 0.4L2.2 1.7L0.6 3" stroke="#555" stroke-width="0.6" fill="none"/></svg>
<svg class="a" style="left:135.7px;top:269.70px" width="5" height="5" viewBox="0 0 5 5"><rect x="0" y="0" width="5" height="5" rx="1" fill="#0d55c4"/><path d="M1.1 2.6L2.1 3.5L3.9 1.4" stroke="#fff" stroke-width="0.55" fill="none"/></svg>
<svg class="a" style="left:142.2px;top:269.60px" width="7" height="5.8" viewBox="0 0 7 5.8"><path d="M0.1 0.1H2Q3.3 0.1 3.3 2.3Q3.3 4.5 2 4.5H0.1Z" fill="#3a2a08"/><path d="M0.9 0.9H1.8Q2.4 0.9 2.4 2.3Q2.4 3.7 1.8 3.7H0.9Z" fill="#f0dc90"/><rect x="3.5" y="0.1" width="3.4" height="4.4" rx="1" fill="#3a2a08"/><path d="M4.2 2.3H6.2M5.2 0.9V3.7" stroke="#e88a10" stroke-width="0.9"/><path d="M0.3 5.3H6.6" stroke="#e8c878" stroke-width="0.6"/></svg>
<div class="t" style="left:150.6px;top:268.45px;color:#111;font-size:5px;">Alternativev safer flight path</div>
<div class="a" style="left:127px;top:276.45px;width:61px;height:6.3px;background:#00f07e"></div>
<svg class="a" style="left:130px;top:278.00px" width="3" height="3.4" viewBox="0 0 3 3.4"><path d="M0.6 0.4L2.2 1.7L0.6 3" stroke="#555" stroke-width="0.6" fill="none"/></svg>
<div class="a" style="left:135.7px;top:277.05px;width:5px;height:5px;border:0.5px solid #6a6a6a;border-radius:0.8px;background:transparent"></div>
<svg class="a" style="left:142.2px;top:276.95px" width="7" height="5.8" viewBox="0 0 7 5.8"><path d="M0.1 0.1H2Q3.3 0.1 3.3 2.3Q3.3 4.5 2 4.5H0.1Z" fill="#3a2a08"/><path d="M0.9 0.9H1.8Q2.4 0.9 2.4 2.3Q2.4 3.7 1.8 3.7H0.9Z" fill="#2a8a40"/><rect x="3.5" y="0.1" width="3.4" height="4.4" rx="1" fill="#3a2a08"/><path d="M4.2 2.3H6.2M5.2 0.9V3.7" stroke="#1a6a20" stroke-width="0.9"/><path d="M0.3 5.3H6.6" stroke="#e8c878" stroke-width="0.6"/></svg>
<div class="t" style="left:150.6px;top:275.80px;color:#111;font-size:5px;font-style:italic;">Safe mode input</div>
<svg class="a" style="left:130px;top:285.35px" width="3" height="3.4" viewBox="0 0 3 3.4"><path d="M0.6 0.4L2.2 1.7L0.6 3" stroke="#555" stroke-width="0.6" fill="none"/></svg>
<svg class="a" style="left:135.7px;top:284.40px" width="5" height="5" viewBox="0 0 5 5"><rect x="0" y="0" width="5" height="5" rx="1" fill="#0d55c4"/><path d="M1.1 2.6L2.1 3.5L3.9 1.4" stroke="#fff" stroke-width="0.55" fill="none"/></svg>
<svg class="a" style="left:142.2px;top:284.30px" width="7" height="5.8" viewBox="0 0 7 5.8"><path d="M0.1 0.1H2Q3.3 0.1 3.3 2.3Q3.3 4.5 2 4.5H0.1Z" fill="#3a2a08"/><path d="M0.9 0.9H1.8Q2.4 0.9 2.4 2.3Q2.4 3.7 1.8 3.7H0.9Z" fill="#f0dc90"/><rect x="3.5" y="0.1" width="3.4" height="4.4" rx="1" fill="#3a2a08"/><path d="M4.2 2.3H6.2M5.2 0.9V3.7" stroke="#e88a10" stroke-width="0.9"/><path d="M0.3 5.3H6.6" stroke="#e8c878" stroke-width="0.6"/></svg>
<div class="t" style="left:150.6px;top:283.15px;color:#111;font-size:5px;">Flight path modification ACK</div>
<svg class="a" style="left:130px;top:292.70px" width="3" height="3.4" viewBox="0 0 3 3.4"><path d="M0.6 0.4L2.2 1.7L0.6 3" stroke="#555" stroke-width="0.6" fill="none"/></svg>
<svg class="a" style="left:135.7px;top:291.75px" width="5" height="5" viewBox="0 0 5 5"><rect x="0" y="0" width="5" height="5" rx="1" fill="#0d55c4"/><path d="M1.1 2.6L2.1 3.5L3.9 1.4" stroke="#fff" stroke-width="0.55" fill="none"/></svg>
<svg class="a" style="left:142.2px;top:291.65px" width="7" height="5.8" viewBox="0 0 7 5.8"><path d="M0.1 0.1H2Q3.3 0.1 3.3 2.3Q3.3 4.5 2 4.5H0.1Z" fill="#3a2a08"/><path d="M0.9 0.9H1.8Q2.4 0.9 2.4 2.3Q2.4 3.7 1.8 3.7H0.9Z" fill="#f0dc90"/><rect x="3.5" y="0.1" width="3.4" height="4.4" rx="1" fill="#3a2a08"/><path d="M4.2 2.3H6.2M5.2 0.9V3.7" stroke="#e88a10" stroke-width="0.9"/><path d="M0.3 5.3H6.6" stroke="#e8c878" stroke-width="0.6"/></svg>
<div class="t" style="left:150.6px;top:290.50px;color:#111;font-size:5px;">Reaction</div>
<svg class="a" style="left:130px;top:300.05px" width="3" height="3.4" viewBox="0 0 3 3.4"><path d="M0.6 0.4L2.2 1.7L0.6 3" stroke="#555" stroke-width="0.6" fill="none"/></svg>
<svg class="a" style="left:135.7px;top:299.10px" width="5" height="5" viewBox="0 0 5 5"><rect x="0" y="0" width="5" height="5" rx="1" fill="#0d55c4"/><path d="M1.1 2.6L2.1 3.5L3.9 1.4" stroke="#fff" stroke-width="0.55" fill="none"/></svg>
<svg class="a" style="left:142.2px;top:299.00px" width="7" height="5.8" viewBox="0 0 7 5.8"><path d="M0.1 0.1H2Q3.3 0.1 3.3 2.3Q3.3 4.5 2 4.5H0.1Z" fill="#3a2a08"/><path d="M0.9 0.9H1.8Q2.4 0.9 2.4 2.3Q2.4 3.7 1.8 3.7H0.9Z" fill="#f0dc90"/><rect x="3.5" y="0.1" width="3.4" height="4.4" rx="1" fill="#3a2a08"/><path d="M4.2 2.3H6.2M5.2 0.9V3.7" stroke="#e88a10" stroke-width="0.9"/><path d="M0.3 5.3H6.6" stroke="#e8c878" stroke-width="0.6"/></svg>
<div class="t" style="left:150.6px;top:297.85px;color:#111;font-size:5px;">Modify flight path</div>
<svg class="a" style="left:130px;top:307.40px" width="3" height="3.4" viewBox="0 0 3 3.4"><path d="M0.6 0.4L2.2 1.7L0.6 3" stroke="#555" stroke-width="0.6" fill="none"/></svg>
<svg class="a" style="left:135.7px;top:306.45px" width="5" height="5" viewBox="0 0 5 5"><rect x="0" y="0" width="5" height="5" rx="1" fill="#0d55c4"/><path d="M1.1 2.6L2.1 3.5L3.9 1.4" stroke="#fff" stroke-width="0.55" fill="none"/></svg>
<svg class="a" style="left:142.2px;top:306.35px" width="7" height="5.8" viewBox="0 0 7 5.8"><path d="M0.1 0.1H2Q3.3 0.1 3.3 2.3Q3.3 4.5 2 4.5H0.1Z" fill="#3a2a08"/><path d="M0.9 0.9H1.8Q2.4 0.9 2.4 2.3Q2.4 3.7 1.8 3.7H0.9Z" fill="#f0dc90"/><rect x="3.5" y="0.1" width="3.4" height="4.4" rx="1" fill="#3a2a08"/><path d="M4.2 2.3H6.2M5.2 0.9V3.7" stroke="#e88a10" stroke-width="0.9"/><path d="M0.3 5.3H6.6" stroke="#e8c878" stroke-width="0.6"/></svg>
<div class="t" style="left:150.6px;top:305.20px;color:#111;font-size:5px;">Alternative safer flight path</div>
<svg class="a" style="left:130px;top:314.75px" width="3" height="3.4" viewBox="0 0 3 3.4"><path d="M0.6 0.4L2.2 1.7L0.6 3" stroke="#555" stroke-width="0.6" fill="none"/></svg>
<svg class="a" style="left:135.7px;top:313.80px" width="5" height="5" viewBox="0 0 5 5"><rect x="0" y="0" width="5" height="5" rx="1" fill="#0d55c4"/><path d="M1.1 2.6L2.1 3.5L3.9 1.4" stroke="#fff" stroke-width="0.55" fill="none"/></svg>
<svg class="a" style="left:142.2px;top:313.70px" width="7" height="5.8" viewBox="0 0 7 5.8"><path d="M0.1 0.1H2Q3.3 0.1 3.3 2.3Q3.3 4.5 2 4.5H0.1Z" fill="#3a2a08"/><path d="M0.9 0.9H1.8Q2.4 0.9 2.4 2.3Q2.4 3.7 1.8 3.7H0.9Z" fill="#f0dc90"/><rect x="3.5" y="0.1" width="3.4" height="4.4" rx="1" fill="#3a2a08"/><path d="M4.2 2.3H6.2M5.2 0.9V3.7" stroke="#e88a10" stroke-width="0.9"/><path d="M0.3 5.3H6.6" stroke="#e8c878" stroke-width="0.6"/></svg>
<div class="t" style="left:150.6px;top:312.55px;color:#111;font-size:5px;">Flight path verification</div>
<svg class="a" style="left:130px;top:322.10px" width="3" height="3.4" viewBox="0 0 3 3.4"><path d="M0.6 0.4L2.2 1.7L0.6 3" stroke="#555" stroke-width="0.6" fill="none"/></svg>
<svg class="a" style="left:135.7px;top:321.15px" width="5" height="5" viewBox="0 0 5 5"><rect x="0" y="0" width="5" height="5" rx="1" fill="#0d55c4"/><path d="M1.1 2.6L2.1 3.5L3.9 1.4" stroke="#fff" stroke-width="0.55" fill="none"/></svg>
<svg class="a" style="left:142.2px;top:321.05px" width="7" height="5.8" viewBox="0 0 7 5.8"><path d="M0.1 0.1H2Q3.3 0.1 3.3 2.3Q3.3 4.5 2 4.5H0.1Z" fill="#3a2a08"/><path d="M0.9 0.9H1.8Q2.4 0.9 2.4 2.3Q2.4 3.7 1.8 3.7H0.9Z" fill="#f0dc90"/><rect x="3.5" y="0.1" width="3.4" height="4.4" rx="1" fill="#3a2a08"/><path d="M4.2 2.3H6.2M5.2 0.9V3.7" stroke="#e88a10" stroke-width="0.9"/><path d="M0.3 5.3H6.6" stroke="#e8c878" stroke-width="0.6"/></svg>
<div class="t" style="left:150.6px;top:319.90px;color:#111;font-size:5px;">Chosen flight path</div>
<svg class="a" style="left:130px;top:329.45px" width="3" height="3.4" viewBox="0 0 3 3.4"><path d="M0.6 0.4L2.2 1.7L0.6 3" stroke="#555" stroke-width="0.6" fill="none"/></svg>
<svg class="a" style="left:135.7px;top:328.50px" width="5" height="5" viewBox="0 0 5 5"><rect x="0" y="0" width="5" height="5" rx="1" fill="#0d55c4"/><path d="M1.1 2.6L2.1 3.5L3.9 1.4" stroke="#fff" stroke-width="0.55" fill="none"/></svg>
<svg class="a" style="left:142px;top:328.00px" width="7" height="6" viewBox="0 0 7 6"><path d="M1.2 1.2L3.2 3.2L5.4 4.8" stroke="#222" stroke-width="0.7" fill="none"/><rect x="0.3" y="0" width="2.2" height="2.2" fill="#e89a20"/><rect x="4.4" y="3.8" width="2.3" height="2.2" fill="#e89a20"/></svg>
<div class="t" style="left:150.6px;top:327.25px;color:#111;font-size:5px;">Create flight path</div>
<div class="a" style="left:275px;top:216.6px;width:6.8px;height:118px;background:#f6f6f6"></div>
<div class="a" style="left:277.8px;top:242.5px;width:0.8px;height:62px;background:#888"></div>
<div class="a" style="left:128px;top:360px;width:9.3px;height:8.6px;border:0.7px solid #6a7a9a;border-radius:50%;background:#fff"></div>
<div class="t" style="left:128px;top:360.6px;width:9.3px;text-align:center;font-size:7px;line-height:8px;height:8px;color:#3a4a6a;-webkit-text-stroke:0.1px #3a4a6a">?</div>
<div class="a" style="left:205px;top:360.3px;width:36.5px;height:8.9px;background:#fdfdfd;border:0.8px solid #70a8e8;border-radius:1.5px"></div>
<div class="t" style="left:220.5px;top:362.50px;color:#111">OK</div>
<div class="a" style="left:245.5px;top:360.3px;width:35.7px;height:8.9px;background:#fdfdfd;border:0.5px solid #e0e0e0;border-radius:1.5px"></div>
<div class="t" style="left:256px;top:362.50px;color:#111">Cancel</div>
<svg class="a" style="left:182px;top:107px" width="6" height="9" viewBox="0 0 6 9"><path d="M0.4 0.4V7.5L2 6L3.2 8.6L4.3 8.1L3.1 5.6L5.3 5.5Z" fill="#fff" stroke="#333" stroke-width="0.5"/></svg>


</body></html>
